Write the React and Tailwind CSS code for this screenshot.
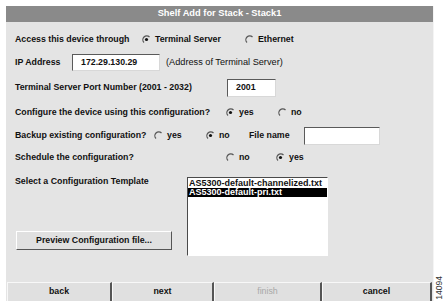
import React from 'react';

const Radio = ({ checked }) => (
  <svg width="9" height="9" viewBox="0 0 9 9" className="shrink-0">
    <path d="M2 7.5 A3.6 3.6 0 0 1 7.5 2" fill="none" stroke="#555" strokeWidth="1.2" />
    {checked && <circle cx="4.5" cy="4.5" r="1.6" fill="#111" />}
  </svg>
);

const Field = ({ value, className }) => (
  <div className={`bg-white border border-t-[#5a5a5a] border-l-[#5a5a5a] border-r-[#d8d8d8] border-b-[#d8d8d8] flex items-center pl-[8px] ${className}`}>
    {value}
  </div>
);

const Choice = ({ checked, label, className }) => (
  <div className={`flex items-center gap-[4px] ${className || ''}`}>
    <Radio checked={checked} />
    <span>{label}</span>
  </div>
);

export default function App() {
  return (
    <div className="w-[444px] h-[301px] overflow-hidden bg-white flex pl-[6px] pt-[6px] text-[#111] font-['Liberation_Sans',Arial,sans-serif] text-[8.8px] font-bold leading-[11px]">
      <div className="w-[428px] shrink-0 bg-[#e4e4e4] border-r border-[#f4f4f4] flex flex-col">
        {/* title bar */}
        <div className="h-[16px] bg-[#8a8a8a] text-white text-[9.3px] flex items-center justify-center">
          Shelf Add for Stack - Stack1
        </div>

        <div className="pl-[9px] flex flex-col">
          <div className="h-[20px] mt-[8px] flex items-center">
            <span className="w-[127px]">Access this device through</span>
            <Choice checked label="Terminal Server" className="w-[103px]" />
            <Choice label="Ethernet" />
          </div>

          <div className="h-[26px] flex items-center">
            <span className="w-[57px]">IP Address</span>
            <Field value="172.29.130.29" className="w-[88px] h-[17px]" />
            <span className="ml-[6px] font-normal text-[9.2px]">(Address of Terminal Server)</span>
          </div>

          <div className="h-[24px] flex items-center">
            <span className="w-[212px]">Terminal Server Port Number (2001 - 2032)</span>
            <Field value="2001" className="w-[49px] h-[18px]" />
          </div>

          <div className="h-[26px] flex items-center">
            <span className="w-[211px]">Configure the device using this configuration?</span>
            <Choice checked label="yes" className="w-[52px]" />
            <Choice label="no" />
          </div>

          <div className="h-[20px] flex items-center">
            <span className="w-[139px]">Backup existing configuration?</span>
            <Choice label="yes" className="w-[52px]" />
            <Choice checked label="no" className="w-[43px]" />
            <span className="w-[55px]">File name</span>
            <Field value="" className="w-[76px] h-[18px]" />
          </div>

          <div className="h-[24px] flex items-center">
            <span className="w-[211px]">Schedule the configuration?</span>
            <Choice label="no" className="w-[50px]" />
            <Choice checked label="yes" />
          </div>

          <div className="flex">
            <div className="w-[172px] flex flex-col">
              <span className="mt-[6px] h-[11px]">Select a Configuration Template</span>
              <button className="mt-[44px] ml-[1px] w-[156px] h-[19px] bg-[#e0e0e0] border border-t-white border-l-white border-r-[#555] border-b-[#555] flex items-center justify-center font-bold">
                Preview Configuration file...
              </button>
            </div>
            <div className="mt-[7px] w-[141px] h-[79px] bg-white border border-t-[#4a4a4a] border-l-[#4a4a4a] border-r-white border-b-white flex flex-col text-[9px] leading-[9px] pt-[1px]">
              <div className="pl-[1px] h-[9px]">AS5300-default-channelized.txt</div>
              <div className="pl-[1px] h-[9px] bg-black text-white">AS5300-default-pri.txt</div>
            </div>
          </div>
        </div>

        {/* wizard buttons */}
        <div className="mt-[26px] ml-[1px] flex h-[20px]">
          {[
            { label: 'back', w: 'w-[105px]', cls: '' },
            { label: 'next', w: 'w-[102px]', cls: '' },
            { label: 'finish', w: 'w-[108px]', cls: 'text-[#a8a8a8] font-normal' },
            { label: 'cancel', w: 'w-[110px]', cls: '' },
          ].map(b => (
            <div key={b.label}
              className={`${b.w} h-full bg-[#e0e0e0] border-t border-l border-t-[#f8f8f8] border-l-[#f8f8f8] border-r-2 border-r-[#555] flex items-center justify-center ${b.cls}`}>
              {b.label}
            </div>
          ))}
        </div>
      </div>

      <div className="w-[10px] flex flex-col justify-end items-center pb-[1px]">
        <span className="[writing-mode:vertical-rl] rotate-180 font-normal text-[8.5px] leading-[9px] text-[#333]">14094</span>
      </div>
    </div>
  );
}
